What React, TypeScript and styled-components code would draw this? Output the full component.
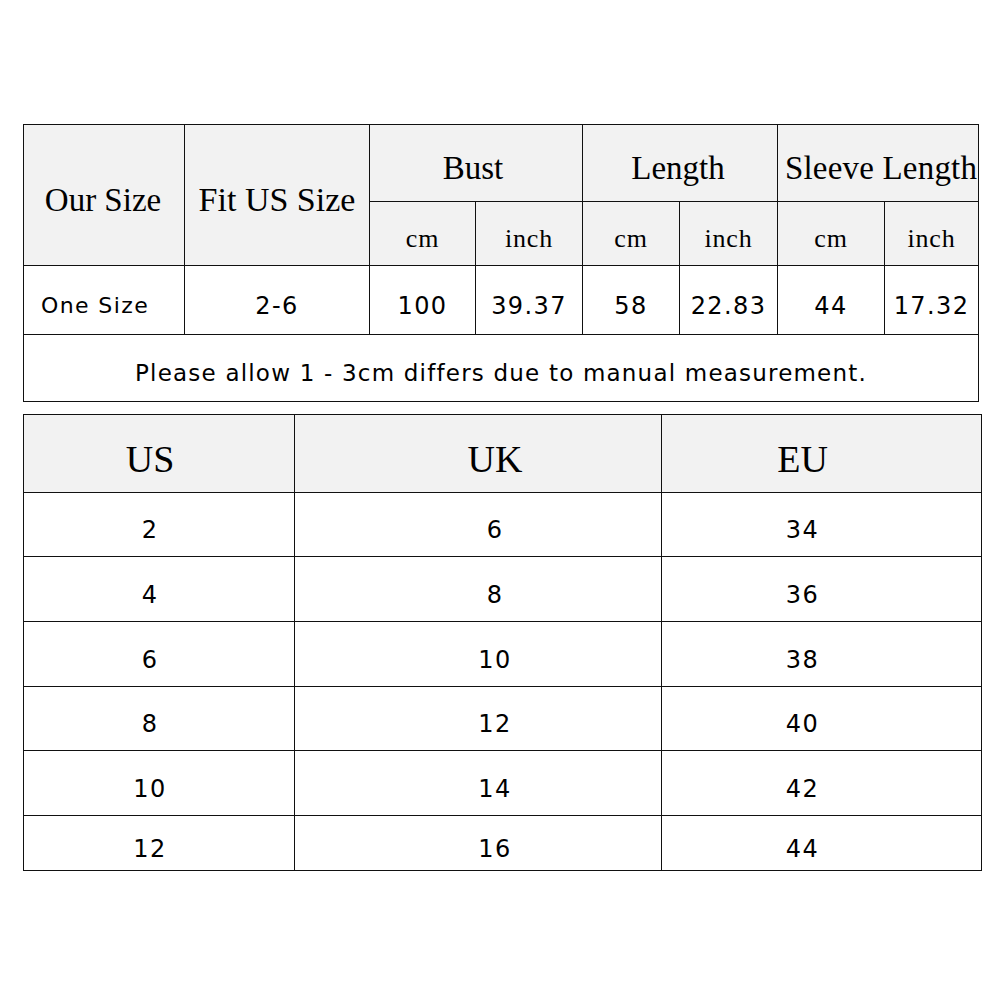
import React from "react";
import styled, { createGlobalStyle } from "styled-components";

const Global = createGlobalStyle`
  html, body { margin: 0; padding: 0; background: #ffffff; }
`;

const Page = styled.div`
  width: 1000px;
  height: 1000px;
  box-sizing: border-box;
  padding: 124px 0 0 23px;
  display: flex;
  flex-direction: column;
  gap: 12px;
  background: #ffffff;
`;

const Table = styled.table<{ $w: number }>`
  border-collapse: collapse;
  table-layout: fixed;
  width: ${(p) => p.$w}px;
  color: #000;
`;

const Row = styled.tr<{ $h: number }>`
  height: ${(p) => p.$h}px;
`;

const Head = styled.td<{ $size?: number; $shift?: number; $ls?: number }>`
  border: 1px solid #111;
  background: #f2f2f2;
  font-family: "Liberation Serif", "DejaVu Serif", serif;
  font-size: ${(p) => p.$size ?? 33}px;
  letter-spacing: ${(p) => p.$ls ?? 0}px;
  text-align: center;
  vertical-align: middle;
  padding: 10px 0 0 0;
  padding-left: ${(p) => ((p.$shift ?? 0) > 0 ? (p.$shift ?? 0) * 2 : 0)}px;
  padding-right: ${(p) => ((p.$shift ?? 0) < 0 ? -(p.$shift ?? 0) * 2 : 0)}px;
  white-space: nowrap;
  overflow: visible;
`;

const Cell = styled.td<{ $size?: number; $shift?: number }>`
  border: 1px solid #111;
  background: #ffffff;
  font-family: "DejaVu Sans", "Liberation Sans", sans-serif;
  font-size: ${(p) => p.$size ?? 24}px;
  letter-spacing: 1.4px;
  text-align: center;
  vertical-align: middle;
  padding: 11px 0 0 0;
  padding-left: ${(p) => ((p.$shift ?? 0) > 0 ? (p.$shift ?? 0) * 2 : 0)}px;
  padding-right: ${(p) => ((p.$shift ?? 0) < 0 ? -(p.$shift ?? 0) * 2 : 0)}px;
  white-space: nowrap;
`;

const Note = styled(Cell)`
  font-size: 23px;
  letter-spacing: 1.2px;
  padding-top: 10px;
`;

const topCols = [161, 185, 106, 107, 97, 98, 107, 94];
const bottomCols = [271, 367, 320];
const bottomShifts = [-9, 17, -19];

const sizeRows = [
  ["2", "6", "34"],
  ["4", "8", "36"],
  ["6", "10", "38"],
  ["8", "12", "40"],
  ["10", "14", "42"],
  ["12", "16", "44"],
];
const sizeRowHeights = [64, 65, 65, 64, 65, 55];

export default function App() {
  return (
    <>
      <Global />
      <Page>
        <Table $w={956}>
          <colgroup>
            {topCols.map((w, i) => (
              <col key={i} style={{ width: w }} />
            ))}
          </colgroup>
          <tbody>
            <Row $h={77}>
              <Head rowSpan={2} $shift={-1}>Our Size</Head>
              <Head rowSpan={2} $size={34}>Fit US Size</Head>
              <Head colSpan={2} $shift={-3}>Bust</Head>
              <Head colSpan={2} $shift={-2}>Length</Head>
              <Head colSpan={2} $shift={3} $ls={0.2}>Sleeve Length</Head>
            </Row>
            <Row $h={64}>
              <Head $size={26} $ls={0.8}>cm</Head>
              <Head $size={26} $ls={0.8}>inch</Head>
              <Head $size={26} $ls={0.8}>cm</Head>
              <Head $size={26} $ls={0.8}>inch</Head>
              <Head $size={26} $ls={0.8}>cm</Head>
              <Head $size={26} $ls={0.8}>inch</Head>
            </Row>
            <Row $h={69}>
              <Cell $size={22} $shift={-9}>One Size</Cell>
              <Cell>2-6</Cell>
              <Cell>100</Cell>
              <Cell>39.37</Cell>
              <Cell>58</Cell>
              <Cell>22.83</Cell>
              <Cell>44</Cell>
              <Cell>17.32</Cell>
            </Row>
            <Row $h={67}>
              <Note colSpan={8}>Please allow 1 - 3cm differs due to manual measurement.</Note>
            </Row>
          </tbody>
        </Table>

        <Table $w={958}>
          <colgroup>
            {bottomCols.map((w, i) => (
              <col key={i} style={{ width: w }} />
            ))}
          </colgroup>
          <tbody>
            <Row $h={78}>
              {["US", "UK", "EU"].map((h, i) => (
                <Head key={h} $size={38} $shift={bottomShifts[i]}>
                  {h}
                </Head>
              ))}
            </Row>
            {sizeRows.map((r, ri) => (
              <Row key={ri} $h={sizeRowHeights[ri]}>
                {r.map((v, ci) => (
                  <Cell key={ci} $shift={bottomShifts[ci]}>
                    {v}
                  </Cell>
                ))}
              </Row>
            ))}
          </tbody>
        </Table>
      </Page>
    </>
  );
}
